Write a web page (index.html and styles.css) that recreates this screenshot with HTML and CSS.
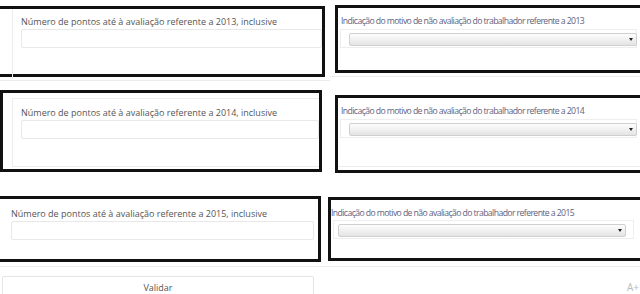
FILE: index.html
```html
<!DOCTYPE html>
<html lang="pt">
<head>
<meta charset="UTF-8">
<meta name="viewport" content="width=device-width, initial-scale=1.0">
<title>Avaliação do trabalhador</title>
<link rel="stylesheet" href="styles.css">
</head>
<body>

<form class="form">
  <!-- 2013 -->
  <div class="row row-1">
    <div class="col col-left">
      <div class="box">
        <div class="panel">
          <label class="label">Número de pontos até à avaliação referente a 2013, inclusive</label>
          <input class="input" type="text">
        </div>
      </div>
    </div>
    <div class="col col-right">
      <div class="box">
        <label class="label label-alt">Indicação do motivo de não avaliação do trabalhador referente a 2013</label>
        <div class="select-wrap"><div class="select"><span class="caret"></span></div></div>
      </div>
    </div>
  </div>

  <!-- 2014 -->
  <div class="row row-2">
    <div class="col col-left">
      <div class="box">
        <div class="panel">
          <label class="label">Número de pontos até à avaliação referente a 2014, inclusive</label>
          <input class="input" type="text">
        </div>
      </div>
    </div>
    <div class="col col-right">
      <div class="box">
        <div class="panel">
          <label class="label label-alt">Indicação do motivo de não avaliação do trabalhador referente a 2014</label>
          <div class="select-wrap"><div class="select"><span class="caret"></span></div></div>
        </div>
      </div>
    </div>
  </div>

  <!-- 2015 -->
  <div class="row row-3">
    <div class="col col-left">
      <div class="box">
        <label class="label">Número de pontos até à avaliação referente a 2015, inclusive</label>
        <input class="input" type="text">
      </div>
    </div>
    <div class="col col-right">
      <div class="box">
        <label class="label label-alt">Indicação do motivo de não avaliação do trabalhador referente a 2015</label>
        <div class="select-wrap"><div class="select"><span class="caret"></span></div></div>
      </div>
    </div>
  </div>

  <div class="actions">
    <button class="btn" type="button">Validar</button>
    <span class="font-size">A+</span>
  </div>
</form>

</body>
</html>
```

FILE: styles.css
```css
body, html {
  margin: 0;
  padding: 0;
  font-family: "Open Sans", "Liberation Sans", sans-serif;
  font-size: 9px;
  color: #555;
  background: #fff;
  overflow: hidden;
}
.form {
  width: 640px;
}
.row {
  display: flex;
  align-items: flex-start;
}
.col {
  box-sizing: border-box;
  flex: none;
}
.box {
  border: 3px solid #111;
  box-sizing: border-box;
  background: #fff;
}
.label {
  display: block;
  line-height: 15px;
  white-space: nowrap;
}
.label-alt {
  color: #62627e;
  font-size: 8.7px;
  letter-spacing: -0.6px; /* texto mais apertado que o da esquerda */
}
.input {
  display: block;
  box-sizing: border-box;
  height: 19px;
  margin: 0;
  padding: 0;
  border: 1px solid #e8e8e8;
  border-radius: 2px;
  background: #fff;
}
.select-wrap {
  box-sizing: border-box;
  height: 19px;
  border: 1px solid #eee;
  padding: 3px 0 0 8px;
}
.select {
  position: relative;
  box-sizing: border-box;
  width: 288px;
  height: 13px;
  border: 1px solid #d0d0d0;
  border-radius: 2px;
  background: linear-gradient(#fdfdfd, #e4e4e4);
}
.caret {
  position: absolute; /* seta do select */
  right: 3px;
  top: 4px;
  width: 0;
  height: 0;
  border-left: 2px solid transparent;
  border-right: 2px solid transparent;
  border-top: 3px solid #222;
}

/* 2013 */
.row-1 {
  height: 85px;
}
.row-1 .col-left {
  width: 333px;
  margin-left: -3px;
  padding: 6px 0 3px;
  border-bottom: 1px solid #ececec;
}
.row-1 .col-left .box {
  width: 328px;
  height: 71px;
}
.row-1 .panel {
  height: 100%;
  margin-left: 12px;
  padding: 5px 0 0 8px;
  border-left: 1px solid #ececec;
}
.row-1 .input {
  width: 301px;
}
.row-1 .col-right {
  width: 320px;
  padding: 5px 0 3px 5px;
  border-bottom: 1px solid #ececec;
}
.row-1 .col-right .box {
  width: 315px;
  height: 68px;
}
.row-1 .col-right .label {
  margin-top: 6px;
  padding-left: 3px;
}
.row-1 .select-wrap {
  width: 297px;
  margin-left: 2px;
}

/* 2014 */
.row-2 {
  height: 105px;
}
.row-2 .col-left {
  width: 322px;
  padding-top: 5px;
}
.row-2 .col-left .box {
  width: 322px;
  height: 82px;
}
.row-2 .col-left .panel {
  height: 69px;
  box-sizing: border-box;
  margin: 5px 0 0 9px;
  padding: 6px 0 0 8px;
  border: 1px solid #ececec;
  border-right: none;
}
.row-2 .input {
  width: 298px;
}
.row-2 .col-right {
  width: 330px;
  padding: 10px 0 0 13px;
}
.row-2 .col-right .box {
  width: 317px;
  height: 78px;
}
.row-2 .col-right .panel {
  height: 69px;
  box-sizing: border-box;
  padding-top: 6px;
  border-bottom: 1px solid #ececec;
}
.row-2 .col-right .label {
  padding-left: 3px;
}
.row-2 .select-wrap {
  width: 297px;
  margin-left: 2px;
}

/* 2015 */
.row-3 {
  height: 80px;
}
.row-3 .col-left {
  width: 333px;
  margin-left: -3px;
  padding: 6px 0 4px;
  border-bottom: 1px solid #ececec;
}
.row-3 .col-left .box {
  width: 324px;
  height: 66px;
  padding: 7px 0 0 11px;
}
.row-3 .input {
  width: 303px;
}
.row-3 .col-right {
  width: 312px;
  margin-left: -2px;
  padding: 7px 0 5px;
  border-bottom: 1px solid #ececec;
}
.row-3 .col-right .box {
  width: 320px;
  height: 64px;
}
.row-3 .col-right .label {
  margin-top: 6px;
  line-height: 14px;
}
.row-3 .select-wrap {
  width: 301px;
  margin-left: 2px;
  padding-left: 4px;
}

.actions {
  display: flex;
  align-items: flex-start;
  margin-top: 6px;
}
.btn {
  width: 312px;
  height: 24px;
  margin-left: 2px;
  padding: 0 0 2px;
  border: 1px solid #e5e5e5;
  border-radius: 2px;
  background: #fff;
  font-family: inherit;
  font-size: 9px;
  color: #555;
}
.font-size {
  margin-left: auto;
  margin-right: 1px;
  margin-top: 6px;
  font-size: 10px;
  line-height: 10px;
  color: #bbb;
}
```
